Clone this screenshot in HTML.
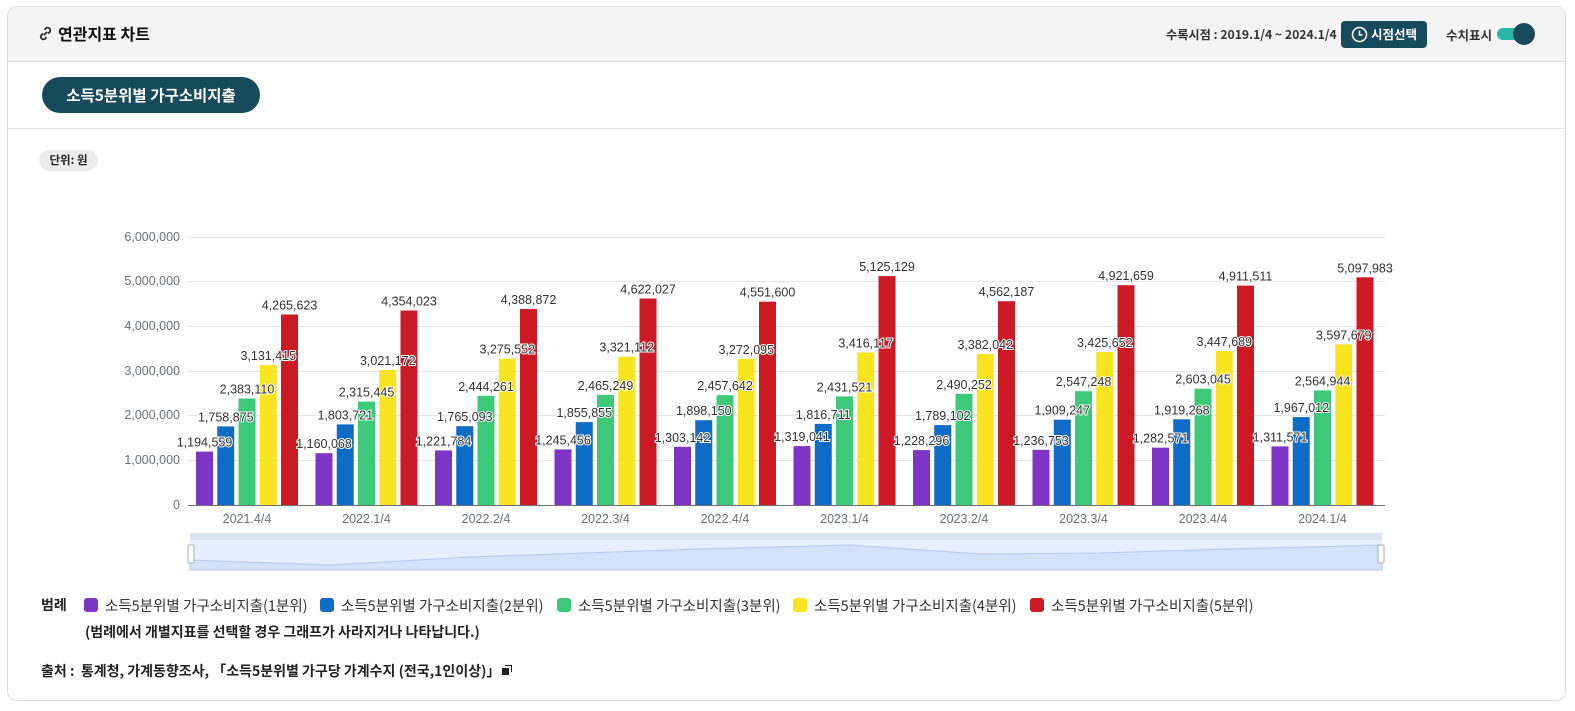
<!DOCTYPE html>
<html><head><meta charset="utf-8"><style>
body{margin:0;width:1575px;height:711px;background:#fff;font-family:"Liberation Sans","Noto Sans CJK KR",sans-serif;position:relative;overflow:hidden}
.card{position:absolute;left:7px;top:6px;width:1557px;height:693px;border:1px solid #dcdcdc;border-radius:10px;overflow:hidden;background:#fff}
.hdr{position:absolute;left:0;top:0;right:0;height:54px;background:#f4f4f4;border-bottom:1px solid #dcdcdc}
.t{position:absolute;font-family:"Noto Sans CJK KR",sans-serif;white-space:nowrap}
</style></head><body>
<div class="card">
<div class="hdr">
<svg style="position:absolute;left:29px;top:18px" width="17" height="17" viewBox="0 0 16 16" fill="none" stroke="#222" stroke-width="1.6"><path d="M6.5 9.5l3-3"/><path d="M7 4.5l1.5-1.5a2.5 2.5 0 013.5 3.5L10.5 8"/><path d="M9 11.5L7.5 13A2.5 2.5 0 014 9.5L5.5 8"/></svg>
<div class="t" style="left:50px;top:14px;font-size:16px;font-weight:bold;color:#111">연관지표 차트</div>
<div class="t" style="left:1158px;top:18px;font-size:12.2px;font-weight:bold;color:#333">수록시점 : 2019.1/4 ~ 2024.1/4</div>
<div style="position:absolute;left:1333px;top:14px;width:86px;height:27px;background:#174a5a;border-radius:4px"></div>
<svg style="position:absolute;left:1343px;top:19px" width="17" height="17" viewBox="0 0 17 17" fill="none" stroke="#fff" stroke-width="1.6"><circle cx="8.5" cy="8.5" r="7"/><path d="M8.5 4.5v4.5h3"/></svg>
<div class="t" style="left:1363px;top:17px;font-size:12.5px;font-weight:bold;color:#fff">시점선택</div>
<div class="t" style="left:1438px;top:18px;font-size:12.5px;font-weight:bold;color:#333">수치표시</div>
<div style="position:absolute;left:1489px;top:21px;width:30px;height:12px;background:#26b8a5;border-radius:6px"></div>
<div style="position:absolute;left:1505px;top:16px;width:22px;height:22px;background:#174a5a;border-radius:50%"></div>
</div>
<div style="position:absolute;left:34px;top:70px;width:218px;height:36px;background:#174a5a;border-radius:18px"></div>
<div class="t" style="left:34px;top:77px;width:218px;text-align:center;font-size:15.5px;font-weight:bold;color:#fff">소득5분위별 가구소비지출</div>
<div style="position:absolute;left:0;right:0;top:121px;height:1px;background:#e4e4e4"></div>
<div style="position:absolute;left:31px;top:143px;width:59px;height:21px;background:#ececec;border-radius:11px"></div>
<div class="t" style="left:31px;top:145px;width:59px;text-align:center;font-size:11.5px;font-weight:bold;color:#222">단위: 원</div>
<div class="t" style="left:33px;top:588px;font-size:14px;font-weight:bold;color:#222">범례</div>
<div style="position:absolute;left:76px;top:591px;width:14px;height:14px;background:#7e35c6;border-radius:3px"></div>
<div class="t" style="left:97px;top:588px;font-size:14.5px;color:#333">소득5분위별 가구소비지출(1분위)</div>
<div style="position:absolute;left:312px;top:591px;width:14px;height:14px;background:#0f6cc6;border-radius:3px"></div>
<div class="t" style="left:333px;top:588px;font-size:14.5px;color:#333">소득5분위별 가구소비지출(2분위)</div>
<div style="position:absolute;left:549px;top:591px;width:14px;height:14px;background:#3cc97a;border-radius:3px"></div>
<div class="t" style="left:570px;top:588px;font-size:14.5px;color:#333">소득5분위별 가구소비지출(3분위)</div>
<div style="position:absolute;left:785px;top:591px;width:14px;height:14px;background:#f9e51f;border-radius:3px"></div>
<div class="t" style="left:806px;top:588px;font-size:14.5px;color:#333">소득5분위별 가구소비지출(4분위)</div>
<div style="position:absolute;left:1022px;top:591px;width:14px;height:14px;background:#cc1a25;border-radius:3px"></div>
<div class="t" style="left:1043px;top:588px;font-size:14.5px;color:#333">소득5분위별 가구소비지출(5분위)</div>
<div class="t" style="left:77px;top:615px;font-size:14px;font-weight:bold;color:#222">(범례에서 개별지표를 선택할 경우 그래프가 사라지거나 나타납니다.)</div>
<div class="t" style="left:33px;top:654px;font-size:14px;font-weight:bold;color:#222">출처 :&nbsp; 통계청, 가계동향조사, 「소득5분위별 가구당 가계수지 (전국,1인이상)」</div>
<div style="position:absolute;left:494px;top:661px;width:7px;height:7px;background:#222"></div>
<div style="position:absolute;left:497px;top:658px;width:6px;height:6px;border-top:1px solid #222;border-right:1px solid #222"></div>
</div>
<svg style="position:absolute;left:0;top:0" width="1575" height="711" font-family="Liberation Sans, sans-serif" font-size="12.5">
<g stroke="#e6e6e6" stroke-width="1"><path d="M188 237.5H1385M188 281.5H1385M188 326.5H1385M188 371.5H1385M188 415.5H1385M188 460.5H1385"/></g>
<path d="M188 505.5H1385" stroke="#6e7079"/>
<g fill="#6e7079" text-anchor="end"><text x="180" y="241">6,000,000</text><text x="180" y="285">5,000,000</text><text x="180" y="330">4,000,000</text><text x="180" y="375">3,000,000</text><text x="180" y="419">2,000,000</text><text x="180" y="464">1,000,000</text><text x="180" y="509">0</text></g>
<g fill="#6e7079" text-anchor="middle"><text x="247" y="523">2021.4/4</text><text x="366.5" y="523">2022.1/4</text><text x="486" y="523">2022.2/4</text><text x="605.5" y="523">2022.3/4</text><text x="725" y="523">2022.4/4</text><text x="844.5" y="523">2023.1/4</text><text x="964" y="523">2023.2/4</text><text x="1083.5" y="523">2023.3/4</text><text x="1203" y="523">2023.4/4</text><text x="1322.5" y="523">2024.1/4</text></g>
<g id="bars">
<g transform="translate(0,0)"><rect x="196" y="451.6" width="17" height="53.4" fill="#7e35c6"/><rect x="217.25" y="426.4" width="17" height="78.6" fill="#0f6cc6"/><rect x="238.5" y="398.5" width="17" height="106.5" fill="#3cc97a"/><rect x="259.75" y="365.1" width="17" height="139.9" fill="#f9e51f"/><rect x="281" y="314.5" width="17" height="190.5" fill="#cc1a25"/></g>
<g transform="translate(119.5,0)"><rect x="196" y="453.2" width="17" height="51.8" fill="#7e35c6"/><rect x="217.25" y="424.4" width="17" height="80.6" fill="#0f6cc6"/><rect x="238.5" y="401.6" width="17" height="103.4" fill="#3cc97a"/><rect x="259.75" y="370" width="17" height="135" fill="#f9e51f"/><rect x="281" y="310.5" width="17" height="194.5" fill="#cc1a25"/></g>
<g transform="translate(239,0)"><rect x="196" y="450.4" width="17" height="54.6" fill="#7e35c6"/><rect x="217.25" y="426.2" width="17" height="78.8" fill="#0f6cc6"/><rect x="238.5" y="395.8" width="17" height="109.2" fill="#3cc97a"/><rect x="259.75" y="358.7" width="17" height="146.3" fill="#f9e51f"/><rect x="281" y="309" width="17" height="196" fill="#cc1a25"/></g>
<g transform="translate(358.5,0)"><rect x="196" y="449.4" width="17" height="55.6" fill="#7e35c6"/><rect x="217.25" y="422.1" width="17" height="82.9" fill="#0f6cc6"/><rect x="238.5" y="394.9" width="17" height="110.1" fill="#3cc97a"/><rect x="259.75" y="356.7" width="17" height="148.3" fill="#f9e51f"/><rect x="281" y="298.5" width="17" height="206.5" fill="#cc1a25"/></g>
<g transform="translate(478,0)"><rect x="196" y="446.8" width="17" height="58.2" fill="#7e35c6"/><rect x="217.25" y="420.2" width="17" height="84.8" fill="#0f6cc6"/><rect x="238.5" y="395.2" width="17" height="109.8" fill="#3cc97a"/><rect x="259.75" y="358.8" width="17" height="146.2" fill="#f9e51f"/><rect x="281" y="301.7" width="17" height="203.3" fill="#cc1a25"/></g>
<g transform="translate(597.5,0)"><rect x="196" y="446.1" width="17" height="58.9" fill="#7e35c6"/><rect x="217.25" y="423.9" width="17" height="81.1" fill="#0f6cc6"/><rect x="238.5" y="396.4" width="17" height="108.6" fill="#3cc97a"/><rect x="259.75" y="352.4" width="17" height="152.6" fill="#f9e51f"/><rect x="281" y="276.1" width="17" height="228.9" fill="#cc1a25"/></g>
<g transform="translate(717,0)"><rect x="196" y="450.1" width="17" height="54.9" fill="#7e35c6"/><rect x="217.25" y="425.1" width="17" height="79.9" fill="#0f6cc6"/><rect x="238.5" y="393.8" width="17" height="111.2" fill="#3cc97a"/><rect x="259.75" y="353.9" width="17" height="151.1" fill="#f9e51f"/><rect x="281" y="301.2" width="17" height="203.8" fill="#cc1a25"/></g>
<g transform="translate(836.5,0)"><rect x="196" y="449.8" width="17" height="55.2" fill="#7e35c6"/><rect x="217.25" y="419.7" width="17" height="85.3" fill="#0f6cc6"/><rect x="238.5" y="391.2" width="17" height="113.8" fill="#3cc97a"/><rect x="259.75" y="352" width="17" height="153" fill="#f9e51f"/><rect x="281" y="285.2" width="17" height="219.8" fill="#cc1a25"/></g>
<g transform="translate(956,0)"><rect x="196" y="447.7" width="17" height="57.3" fill="#7e35c6"/><rect x="217.25" y="419.3" width="17" height="85.7" fill="#0f6cc6"/><rect x="238.5" y="388.7" width="17" height="116.3" fill="#3cc97a"/><rect x="259.75" y="351" width="17" height="154" fill="#f9e51f"/><rect x="281" y="285.6" width="17" height="219.4" fill="#cc1a25"/></g>
<g transform="translate(1075.5,0)"><rect x="196" y="446.4" width="17" height="58.6" fill="#7e35c6"/><rect x="217.25" y="417.1" width="17" height="87.9" fill="#0f6cc6"/><rect x="238.5" y="390.4" width="17" height="114.6" fill="#3cc97a"/><rect x="259.75" y="344.3" width="17" height="160.7" fill="#f9e51f"/><rect x="281" y="277.3" width="17" height="227.7" fill="#cc1a25"/></g>
</g>
<g fill="#333" text-anchor="middle" stroke="#fff" stroke-width="2" paint-order="stroke">
<g><text x="204.5" y="446.6">1,194,559</text><text x="225.75" y="421.4">1,758,875</text><text x="247" y="393.5">2,383,110</text><text x="268.25" y="360.1">3,131,415</text><text x="289.5" y="309.5">4,265,623</text></g>
<g transform="translate(119.5,0)"><text x="204.5" y="448.2">1,160,068</text><text x="225.75" y="419.4">1,803,721</text><text x="247" y="396.6">2,315,445</text><text x="268.25" y="365">3,021,172</text><text x="289.5" y="305.5">4,354,023</text></g>
<g transform="translate(239,0)"><text x="204.5" y="445.4">1,221,784</text><text x="225.75" y="421.2">1,765,093</text><text x="247" y="390.8">2,444,261</text><text x="268.25" y="353.7">3,275,552</text><text x="289.5" y="304">4,388,872</text></g>
<g transform="translate(358.5,0)"><text x="204.5" y="444.4">1,245,456</text><text x="225.75" y="417.1">1,855,855</text><text x="247" y="389.9">2,465,249</text><text x="268.25" y="351.7">3,321,112</text><text x="289.5" y="293.5">4,622,027</text></g>
<g transform="translate(478,0)"><text x="204.5" y="441.8">1,303,142</text><text x="225.75" y="415.2">1,898,150</text><text x="247" y="390.2">2,457,642</text><text x="268.25" y="353.8">3,272,095</text><text x="289.5" y="296.7">4,551,600</text></g>
<g transform="translate(597.5,0)"><text x="204.5" y="441.1">1,319,041</text><text x="225.75" y="418.9">1,816,711</text><text x="247" y="391.4">2,431,521</text><text x="268.25" y="347.4">3,416,117</text><text x="289.5" y="271.1">5,125,129</text></g>
<g transform="translate(717,0)"><text x="204.5" y="445.1">1,228,296</text><text x="225.75" y="420.1">1,789,102</text><text x="247" y="388.8">2,490,252</text><text x="268.25" y="348.9">3,382,042</text><text x="289.5" y="296.2">4,562,187</text></g>
<g transform="translate(836.5,0)"><text x="204.5" y="444.8">1,236,753</text><text x="225.75" y="414.7">1,909,247</text><text x="247" y="386.2">2,547,248</text><text x="268.25" y="347">3,425,652</text><text x="289.5" y="280.2">4,921,659</text></g>
<g transform="translate(956,0)"><text x="204.5" y="442.7">1,282,571</text><text x="225.75" y="414.3">1,919,268</text><text x="247" y="383.7">2,603,045</text><text x="268.25" y="346">3,447,689</text><text x="289.5" y="280.6">4,911,511</text></g>
<g transform="translate(1075.5,0)"><text x="204.5" y="441.4">1,311,571</text><text x="225.75" y="412.1">1,967,012</text><text x="247" y="385.4">2,564,944</text><text x="268.25" y="339.3">3,597,679</text><text x="289.5" y="272.3">5,097,983</text></g>
</g>
<rect x="190" y="533" width="1192" height="37" fill="#e6eeff"/>
<rect x="190" y="533" width="1192" height="7" fill="#dce3f0"/>
<path d="M190 560 L330 565 L470 557 L700 549 L850 545 L980 554 L1100 553 L1230 549 L1382 545 V570 H190Z" fill="#d3e1fb" stroke="#b4c8f0" stroke-width="1"/>
<rect x="188" y="545" width="6" height="18" rx="1" fill="#fff" stroke="#aab" />
<rect x="1378" y="545" width="6" height="18" rx="1" fill="#fff" stroke="#aab" />
</svg>
</body></html>
